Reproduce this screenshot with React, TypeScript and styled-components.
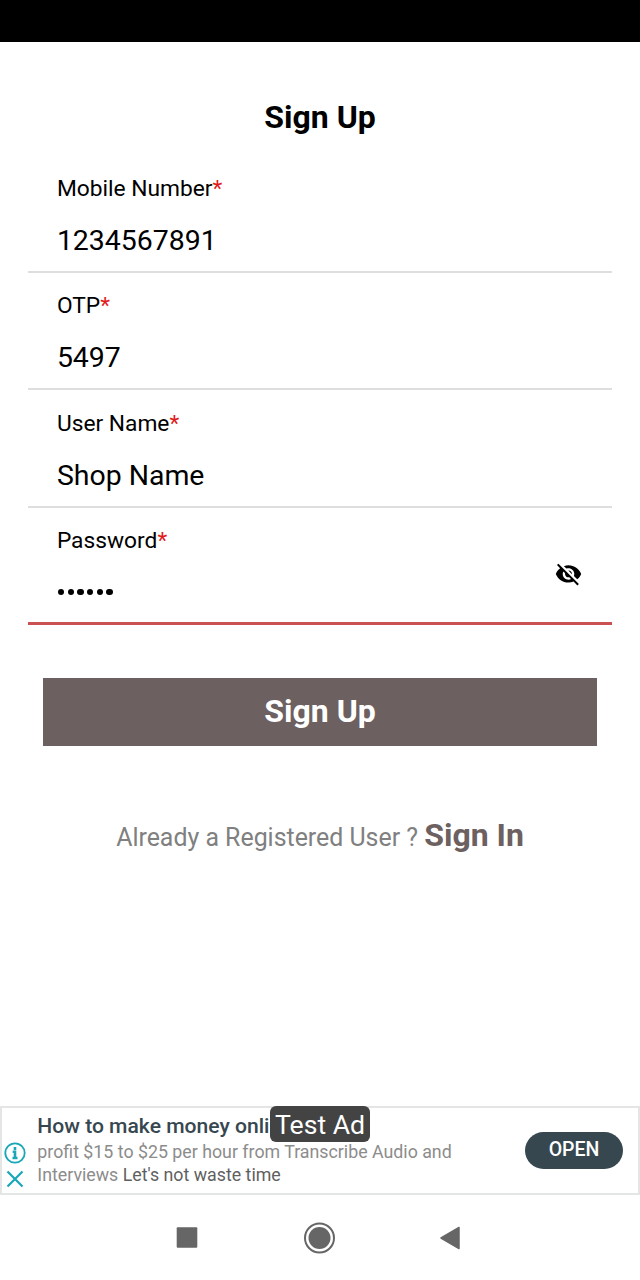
import React from 'react';
import styled, { createGlobalStyle } from 'styled-components';
import { IoMdEyeOff } from 'react-icons/io';

const GlobalStyle = createGlobalStyle`
  *, *::before, *::after { box-sizing: border-box; }
  body { margin: 0; background: #fff; font-family: Roboto, "Liberation Sans", sans-serif; }
`;

const Screen = styled.div`
  display: flex;
  flex-direction: column;
  width: 640px;
  height: 1280px;
  overflow: hidden;
  background: #fff;
  color: #000;
`;

const StatusBar = styled.div`
  flex: none;
  height: 42px;
  background: #000;
`;

const Content = styled.main`
  flex: 1;
  display: flex;
  flex-direction: column;
  padding: 57px 28.4px 0;
`;

const Title = styled.h1`
  margin: 0 0 18.6px;
  height: 38px;
  line-height: 37px;
  font-size: 32px;
  font-weight: 700;
  text-align: center;
`;

const Field = styled.div<{ $active?: boolean }>`
  flex: none;
  display: flex;
  align-items: center;
  height: 117.33px;
  padding: 0 28.5px;
  border-bottom: ${p => (p.$active ? '3.5px solid #cb5252' : '2px solid #dedede')};
`;

const FieldText = styled.div`
  flex: 1;
  align-self: stretch;
  display: flex;
  flex-direction: column;
  padding-top: 20.5px;
`;

const Label = styled.label`
  height: 26px;
  line-height: 26px;
  font-size: 22.75px;
`;

const Required = styled.span`
  color: #e01b1b;
`;

const Value = styled.div`
  margin-top: 22px;
  height: 34px;
  line-height: 34px;
  font-size: 28.44px;
`;

const Dots = styled.div`
  display: flex;
  gap: 3.2px;
  margin-top: 34.5px;
  padding-left: 1px;
`;

const Dot = styled.i`
  width: 6.5px;
  height: 6.5px;
  border-radius: 50%;
  background: #000;
`;

const Toggle = styled.span`
  display: flex;
  margin-top: 20px;
`;

const SubmitButton = styled.button`
  flex: none;
  height: 67.5px;
  margin: 53.5px 14.2px 0;
  padding: 0 0 2px;
  border: 0;
  background: #6d6060;
  color: #fff;
  font: 700 32px/65px Roboto, "Liberation Sans", sans-serif;
`;

const SignInRow = styled.p`
  margin: 70.5px 0 0;
  height: 38px;
  line-height: 38px;
  font-size: 24.9px;
  color: #808080;
  text-align: center;
  white-space: pre;
`;

const SignInLink = styled.a`
  font-size: 32px;
  font-weight: 700;
  color: #6d6060;
`;

const AdBanner = styled.aside`
  position: relative;
  flex: none;
  display: flex;
  align-items: center;
  height: 89px;
  padding-right: 15px;
  border: 2px solid #e4e6e6;
`;

const AdControls = styled.div`
  display: flex;
  flex-direction: column;
  align-items: center;
  align-self: flex-end;
  gap: 6px;
  width: 26px;
  padding-bottom: 5px;
`;

const AdCopy = styled.div`
  flex: 1;
  align-self: stretch;
  padding: 5px 0 0 9.3px;
  white-space: nowrap;
`;

const AdHeadline = styled.div`
  height: 26px;
  line-height: 26px;
  font-size: 21.1px;
  font-weight: 500;
  color: #37474f;
`;

const AdLine = styled.div`
  height: 23px;
  line-height: 26px;
  font-size: 17.8px;
  color: #8c8c8c;
`;

const AdEmphasis = styled.span`
  color: #5f5f5f;
`;

const AdButton = styled.button`
  width: 98px;
  height: 37.5px;
  padding: 0 0 2px;
  border: 0;
  border-radius: 19px;
  background: #37474f;
  color: #fff;
  font: 500 19.5px/35px Roboto, "Liberation Sans", sans-serif;
`;

const TestAdBadge = styled.span`
  position: absolute;
  left: 268px;
  top: -2px;
  width: 100px;
  height: 36px;
  border-radius: 6px;
  background: #434343;
  color: #fff;
  font-size: 26.6px;
  line-height: 38px;
  text-align: center;
`;

const NavBar = styled.nav`
  flex: none;
  display: flex;
  align-items: center;
  justify-content: space-between;
  height: 85px;
  padding: 0 179px 0 176px;
`;

const fields = [
  { label: 'Mobile Number', value: '1234567891' },
  { label: 'OTP', value: '5497' },
  { label: 'User Name', value: 'Shop Name' },
];

export default function App() {
  return (
    <Screen>
      <GlobalStyle />
      <StatusBar />
      <Content>
        <Title>Sign Up</Title>
        {fields.map(f => (
          <Field key={f.label}>
            <FieldText>
              <Label>{f.label}<Required>*</Required></Label>
              <Value>{f.value}</Value>
            </FieldText>
          </Field>
        ))}
        <Field $active>
          <FieldText>
            <Label>Password<Required>*</Required></Label>
            <Dots>{[0, 1, 2, 3, 4, 5].map(i => <Dot key={i} />)}</Dots>
          </FieldText>
          <Toggle><IoMdEyeOff size={29} /></Toggle>
        </Field>
        <SubmitButton>Sign Up</SubmitButton>
        <SignInRow>Already a Registered User ? <SignInLink>Sign In</SignInLink></SignInRow>
      </Content>
      <AdBanner>
        <AdControls>
          <svg width="22" height="22" viewBox="0 0 22 22" fill="none" stroke="#19a7b8">
            <circle cx="11" cy="11" r="9.7" strokeWidth="1.8" />
            <path d="M11 5v3M8.7 9.8H11V16M8.5 16h5" strokeWidth="2.6" />
          </svg>
          <svg width="18" height="18" viewBox="0 0 18 18" fill="none" stroke="#19a7b8" strokeWidth="2.2">
            <path d="M1.5 1.5l15 15M16.5 1.5l-15 15" />
          </svg>
        </AdControls>
        <AdCopy>
          <AdHeadline>How to make money onli</AdHeadline>
          <AdLine>profit $15 to $25 per hour from Transcribe Audio and</AdLine>
          <AdLine>Interviews <AdEmphasis>Let's not waste time</AdEmphasis></AdLine>
        </AdCopy>
        <AdButton>OPEN</AdButton>
        <TestAdBadge>Test Ad</TestAdBadge>
      </AdBanner>
      <NavBar>
        <svg width="22" height="22" viewBox="0 0 22 22" fill="#666">
          <rect x="0.7" y="0.2" width="20.6" height="20.6" rx="1" />
        </svg>
        <svg width="32" height="32" viewBox="0 0 32 32" fill="#666">
          <circle cx="16.5" cy="16" r="14.5" fill="none" stroke="#666" strokeWidth="2" />
          <circle cx="16.5" cy="16" r="11" />
        </svg>
        <svg width="22" height="24" viewBox="0 0 22 24" fill="#666" stroke="#666" strokeWidth="1.5" strokeLinejoin="round">
          <path d="M20 1.5v21L2 12z" />
        </svg>
      </NavBar>
    </Screen>
  );
}
